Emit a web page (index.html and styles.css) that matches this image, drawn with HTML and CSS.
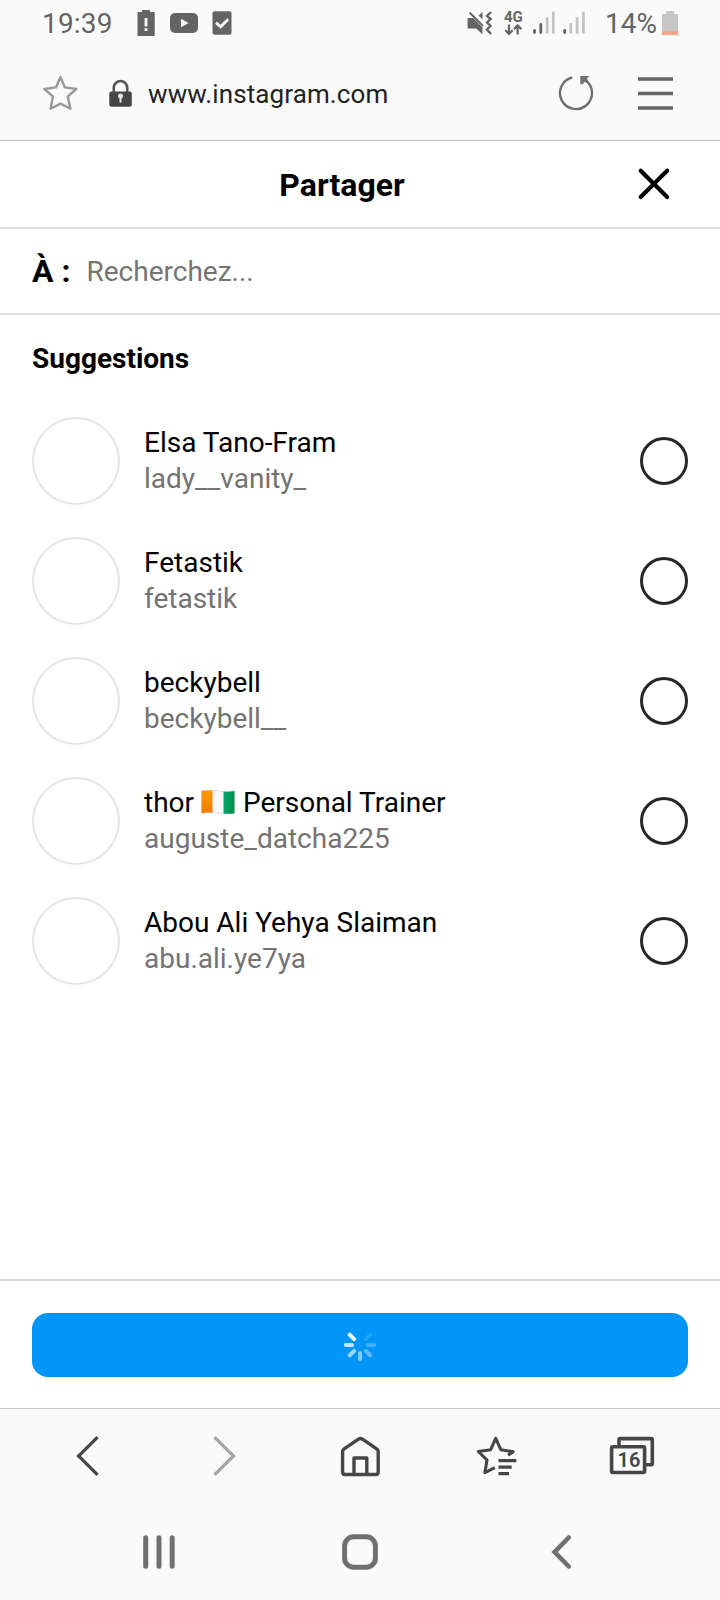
FILE: index.html
```html
<!DOCTYPE html>
<html lang="fr">
<head>
<meta charset="utf-8">
<title>Partager</title>
<link rel="stylesheet" href="styles.css">
</head>
<body>
<div class="screen">
  <div class="status">
    <span class="time">19:39</span>
    <svg class="st-batt" width="18" height="27" viewBox="137 10 18 27"><path fill="#646464" d="M142 10h8v2h4.700v24h-17.200v-24h4.500z"/><path fill="#fafafa" d="M144.600 18h2.800v8.500h-2.800zM144.600 28.300h2.800v2.700h-2.800z"/></svg>
    <svg class="st-video" width="28" height="20" viewBox="170 13 28 20"><rect x="170" y="13" width="28" height="20" rx="5" fill="#646464"/><path fill="#fafafa" d="M181 18.800l7.500 4.200-7.500 4.200z"/></svg>
    <svg class="st-check" width="20" height="24" viewBox="212 11 20 24"><rect x="212.500" y="11.300" width="19" height="23.500" rx="2" fill="#646464"/><path fill="none" stroke="#fafafa" stroke-width="2.800" d="M216 22.600l4.600 4.200 7.600-7.600"/></svg>
    <div class="st-right">
      <svg width="25" height="25" viewBox="467 10 25 25"><path fill="#646464" d="M467.600 17h5.500l9.400 9.500v6.700l-6.300-5.600h-8.600zM482.500 11v7.500l-4-4z"/><path fill="none" stroke="#646464" stroke-width="2" d="M469.500 11.500l13.500 13.500"/><path fill="none" stroke="#646464" stroke-width="2.400" d="M491 11l-4 4 3.600 3-3.600 3.500 3.600 3.500-3.600 3.500 4 4.500"/></svg>
      <div class="net"><span class="net-label">4G</span><svg width="18" height="12" viewBox="504 24 18 12"><path fill="none" stroke="#646464" stroke-width="2.200" d="M509 24.500v9M505.300 30.200l3.700 3.800 3.700-3.800M517.600 34.500v-8M513.900 29.200l3.700-3.800 3.700 3.800"/></svg></div>
      <svg class="sig1" width="23" height="24" viewBox="532 11 23 24" fill="none" stroke-width="2.800" stroke-linecap="round"><path stroke="#646464" d="M534.500 30.500v2M540.800 24.500v8"/><path stroke="#c3c3c3" d="M547.200 18.500v14M553.300 13v19.500"/></svg>
      <svg class="sig2" width="23" height="24" viewBox="562 11 23 24" fill="none" stroke-width="2.800" stroke-linecap="round"><path stroke="#646464" d="M564.700 30.500v2"/><path stroke="#c3c3c3" d="M570.800 24.500v8M577.100 18.500v14M583.400 13v19.500"/></svg>
      <span class="percent">14%</span>
      <svg width="16" height="25" viewBox="662 10 16 25"><path fill="#c6c6c6" d="M666.300 10h7.600v3h4.100v17h-16v-17h4.300z"/><path fill="#ffa38a" d="M662 30h16v4h-16z"/></svg>
    </div>
  </div>

  <div class="urlbar">
    <svg class="star" width="36" height="36" viewBox="42 75 36 36"><path fill="none" stroke="#999" stroke-width="2.400" stroke-linejoin="round" d="M60.500 77l4.300 10.400 11.600 1.600-8.600 7.400 2.600 12.400-9.900-5.200-9.900 5.200 2.300-12.400-8.600-7.400 11.600-1.600z"/></svg>
    <svg class="lock" width="24" height="28" viewBox="109 79 24 28"><rect x="109.300" y="91.500" width="22.500" height="15.300" rx="2" fill="#464646"/><path fill="none" stroke="#565656" stroke-width="2.600" d="M113.800 92v-4.300a6.700 6.700 0 0 1 13.400 0v4.300"/><circle cx="120.500" cy="96" r="2.500" fill="#e8e8e8"/><path stroke="#e8e8e8" stroke-width="2" d="M120.500 96v6.500"/></svg>
    <span class="url">www.instagram.com</span>
    <svg class="reload" width="36" height="36" viewBox="558 75 36 36"><path fill="none" stroke="#707070" stroke-width="2.400" d="M572.300 77.500a16 16 0 1 0 13.600 3"/><path fill="#707070" d="M580.300 76h9l-2.400 2.600 1.300 2.400-2 1.700-2.200-1-.8 2.600h-2.900z"/></svg>
    <svg class="menu" width="35" height="34" viewBox="638 76 35 34"><path stroke="#666" stroke-width="3.500" d="M638 79h35M638 93.500h35M638 108h35"/></svg>
  </div>

  <div class="dialog-head">
    <h1>Partager</h1>
    <svg class="close" width="34" height="34" viewBox="637 167 34 34"><path stroke="#000" stroke-width="4.200" stroke-linecap="round" d="M640.700 170.700l26.400 26.400M667.100 170.700l-26.400 26.400"/></svg>
  </div>

  <div class="search"><span class="to">À :</span><span class="placeholder">Recherchez...</span></div>

  <main class="list">
    <h2>Suggestions</h2>
    <div class="row"><span class="avatar"></span><div class="who"><div class="name">Elsa Tano-Fram</div><div class="handle">lady__vanity_</div></div><span class="radio"></span></div>
    <div class="row"><span class="avatar"></span><div class="who"><div class="name">Fetastik</div><div class="handle">fetastik</div></div><span class="radio"></span></div>
    <div class="row"><span class="avatar"></span><div class="who"><div class="name">beckybell</div><div class="handle">beckybell__</div></div><span class="radio"></span></div>
    <div class="row"><span class="avatar"></span><div class="who"><div class="name">thor <svg class="flag" width="34" height="24" viewBox="0 0 34 24"><defs><linearGradient id="og" x2="0" y2="1"><stop stop-color="#ff9a0a"/><stop offset="1" stop-color="#f57c00"/></linearGradient><linearGradient id="gr"><stop stop-color="#00a86b"/><stop offset="1" stop-color="#078a4c"/></linearGradient></defs><path fill="#f8f8f8" stroke="#c8c8c8" stroke-width=".6" d="M1 1q8-1.500 16 0t16 0v22q-8 1-16 0t-16 0z"/><path fill="url(#og)" d="M.500 1q5-1 11-.700v22.400q-6-.700-11 .7z"/><path fill="url(#gr)" d="M22.500 1.500q6 .5 11-.5v22.200q-5 1-11 .3z"/></svg> Personal Trainer</div><div class="handle">auguste_datcha225</div></div><span class="radio"></span></div>
    <div class="row"><span class="avatar"></span><div class="who"><div class="name">Abou Ali Yehya Slaiman</div><div class="handle">abu.ali.ye7ya</div></div><span class="radio"></span></div>
  </main>

  <div class="footer">
    <div class="send">
      <svg width="34" height="34" viewBox="-17 -17 34 34" stroke="#fff" stroke-width="4" stroke-linecap="round"><path opacity=".95" d="M-10.300-10.300l4.400 4.400"/><path opacity=".75" d="M-14.200 0h6.200"/><path opacity=".62" d="M-10.300 10.300l4.400-4.400"/><path opacity=".5" d="M0 14.200v-6.200"/><path opacity=".37" d="M10.300 10.300l-4.400-4.400"/><path opacity=".25" d="M14.200 0h-6.200"/><path opacity=".12" d="M10.300-10.300l-4.400 4.400"/></svg>
    </div>
  </div>

  <div class="toolbar">
    <svg width="50" height="48" viewBox="63 1432 50 48"><path fill="none" stroke="#464646" stroke-width="3.200" d="M97.600 1437.200l-19 18.800 19 18.800"/></svg>
    <svg width="50" height="48" viewBox="199 1432 50 48"><path fill="none" stroke="#a5a5a5" stroke-width="3.200" d="M214.500 1437.200l19 18.800-19 18.800"/></svg>
    <svg width="50" height="48" viewBox="335 1432 50 48"><path fill="none" stroke="#464646" stroke-width="3.400" stroke-linejoin="round" d="M342.600 1451.500q0-1.500 1.200-2.400l14.700-9.900q2-1.300 4 0l14.500 9.900q1.200.9 1.200 2.400v20.500q0 2.500-2.500 2.500h-30.600q-2.500 0-2.500-2.500zM354 1474v-16h12.800v16"/></svg>
    <svg width="50" height="48" viewBox="471 1432 50 48"><path fill="none" stroke="#464646" stroke-width="3.100" stroke-linejoin="round" d="M494.800 1467.600l-9.900 5 2.100-12.600-8.700-8.500 12.300-1.700 5.100-11.500 5.200 11.500 12.300 1.900-5.200 3.600"/><path stroke="#464646" stroke-width="3.200" d="M498.500 1460.700h17.800M498.500 1467.200h13.200M498.500 1473.600h10.500"/></svg>
    <div class="tabs"><svg width="50" height="48" viewBox="607 1432 50 48"><path fill="none" stroke="#464646" stroke-width="3.600" d="M619 1445v-5.200q0-1.200 1.200-1.200h30.900q1.200 0 1.200 1.200v23.700q0 1.200-1.200 1.200h-5.600"/><rect x="611.600" y="1446.800" width="33" height="25.700" rx="1.500" fill="none" stroke="#464646" stroke-width="3.600"/></svg><span class="count">16</span></div>
  </div>

  <div class="sysbar">
    <svg width="60" height="50" viewBox="129 1527 60 50"><path stroke="#707070" stroke-width="5" stroke-linecap="round" d="M145.700 1537.700v28.600M159 1537.700v28.600M172.200 1537.700v28.600"/></svg>
    <svg width="60" height="50" viewBox="330 1527 60 50"><rect x="344.600" y="1536.800" width="30.800" height="30.400" rx="9" fill="none" stroke="#707070" stroke-width="5"/></svg>
    <svg width="60" height="50" viewBox="531 1527 60 50"><path fill="none" stroke="#707070" stroke-width="4.600" stroke-linecap="round" d="M568.800 1537.500l-14.200 14.500 14.200 14.500"/></svg>
  </div>
</div>
</body>
</html>
```
FILE: styles.css
```css
* { box-sizing: border-box; }
body { margin: 0; font-family: Roboto, "Liberation Sans", sans-serif; background: #fff; }
svg { display: block; flex: none; }
h1, h2 { margin: 0; }
.screen { width: 720px; height: 1600px; display: flex; flex-direction: column; overflow: hidden; }

.status { height: 46px; background: #fafafa; display: flex; align-items: center; padding: 0 42px; color: #646464; flex: none; }
.time { width: 95px; padding-top: 1px; font-size: 28px; font-weight: 450; line-height: 46px; letter-spacing: .2px; }
.st-video { margin-left: 15px; }
.st-check { margin-left: 14px; }
.st-right { margin-left: auto; display: flex; align-items: center; }
.net { margin-left: 12px; width: 20px; height: 26px; }
.net-label { display: block; font-size: 15px; font-weight: 700; line-height: 14px; height: 14px; }
.sig1 { margin-left: 8px; }
.sig2 { margin-left: 7px; }
.percent { width: 57px; margin-left: 20px; padding-top: 1px; font-size: 28px; font-weight: 450; line-height: 46px; }

.urlbar { height: 95px; background: #fafafa; border-bottom: 1px solid #c8c8c8; display: flex; align-items: center; padding-left: 42px; flex: none; }
.lock { margin-left: 31px; }
.url { flex: none; width: 410px; margin-left: 15px; padding-top: 2px; font-size: 26px; line-height: 36px; letter-spacing: .1px; color: #222; }
.menu { margin-left: 44px; }

.dialog-head { height: 88px; border-bottom: 2px solid #dbdbdb; display: flex; align-items: center; justify-content: space-between; padding: 0 49px; flex: none; }
.dialog-head h1 { flex: 1; padding: 2px 2px 0 0; text-align: center; font-size: 32px; font-weight: 700; line-height: 48px; }

.search { height: 86px; border-bottom: 2px solid #dbdbdb; display: flex; align-items: center; padding-left: 32px; flex: none; }
.to { width: 54.500px; font-size: 32px; font-weight: 700; }
.placeholder { font-size: 28px; color: #757575; }

.list { flex: 1; }
.list h2 { height: 86px; padding: 1px 0 0 32px; font-size: 28px; font-weight: 700; line-height: 86px; }
.row { height: 120px; padding: 0 32px; display: flex; align-items: center; }
.avatar { width: 88px; height: 88px; border: 2px solid #e5e5e5; border-radius: 50%; }
.who { flex: 1; margin-left: 24px; font-size: 28px; line-height: 36px; }
.handle { color: #737373; }
.flag { display: inline-block; vertical-align: -2px; margin: 0 .5px; }
.radio { width: 48px; height: 48px; border: 3px solid #262626; border-radius: 50%; }

.footer { height: 129px; border-top: 2px solid #dbdbdb; padding: 32px; flex: none; }
.send { height: 64px; border-radius: 16px; background: #0095f6; display: flex; align-items: center; justify-content: center; }

.toolbar { height: 96px; background: #fafafa; border-top: 1px solid #c8c8c8; display: flex; justify-content: space-between; align-items: center; padding: 0 63px 2px; flex: none; }
.tabs { position: relative; }
.count { position: absolute; left: 5px; top: 16px; width: 34px; font-size: 20px; line-height: 24px; font-weight: 600; text-align: center; color: #464646; }
.sysbar { height: 96px; background: #fafafa; display: flex; justify-content: space-between; align-items: center; padding: 0 129px; flex: none; }
```
